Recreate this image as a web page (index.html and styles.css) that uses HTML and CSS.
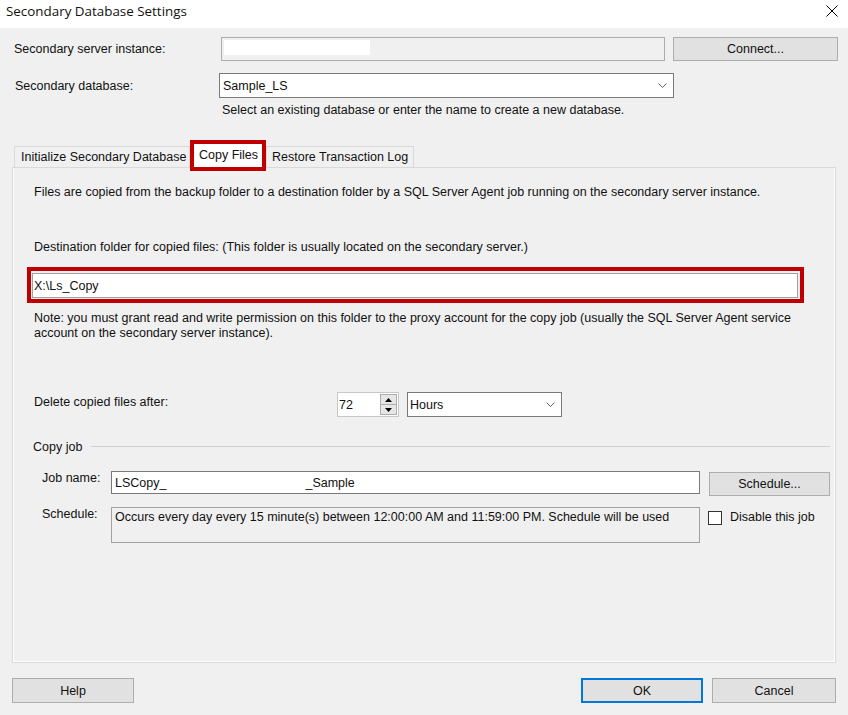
FILE: index.html
```html
<!DOCTYPE html>
<html>
<head>
<meta charset="utf-8">
<title>Secondary Database Settings</title>
<link rel="stylesheet" href="styles.css">
</head>
<body>
<div class="window">
  <div class="titlebar">
    <span class="title">Secondary Database Settings</span>
    <svg class="close" width="12" height="12" viewBox="0 0 12 12"><path d="M0.5 0.5 L11.5 11.5 M11.5 0.5 L0.5 11.5" stroke="#000" stroke-width="1" fill="none"/></svg>
  </div>
  <div class="client">
    <div class="row r1">
      <span class="lbl l-server">Secondary server instance:</span>
      <div class="textbox readonly server"><span class="redact"></span></div>
      <div class="btn connect">Connect...</div>
    </div>
    <div class="row r2">
      <span class="lbl l-db">Secondary database:</span>
      <div class="textbox combo db"><span class="val">Sample_LS</span><svg class="chev" width="9" height="5" viewBox="0 0 9 5"><path d="M0.5 0.5 L4.5 4.5 L8.5 0.5" stroke="#606060" stroke-width="1" fill="none"/></svg></div>
    </div>
    <div class="hint">Select an existing database or enter the name to create a new database.</div>

    <div class="tabs">
      <div class="tab t1">Initialize Secondary Database</div>
      <div class="tab t2 selected">Copy Files</div>
      <div class="tab t3">Restore Transaction Log</div>
    </div>

    <div class="panel">
      <div class="ptext intro">Files are copied from the backup folder to a destination folder by a SQL Server Agent job running on the secondary server instance.</div>
      <div class="ptext dest">Destination folder for copied files: (This folder is usually located on the secondary server.)</div>
      <div class="highlight">
        <div class="textbox destbox">X:\Ls_Copy</div>
      </div>
      <div class="ptext note">Note: you must grant read and write permission on this folder to the proxy account for the copy job (usually the SQL Server Agent service<br>account on the secondary server instance).</div>

      <div class="delrow">
        <span class="lbl l-del">Delete copied files after:</span>
        <div class="textbox spin">
          <span class="val">72</span>
          <div class="spinbtns">
            <div class="sb"><svg width="7" height="4" viewBox="0 0 7 4"><path d="M3.5 0 L7 4 L0 4 Z" fill="#000"/></svg></div>
            <div class="sb"><svg width="7" height="4" viewBox="0 0 7 4"><path d="M0 0 L7 0 L3.5 4 Z" fill="#000"/></svg></div>
          </div>
        </div>
        <div class="textbox combo hours"><span class="val">Hours</span><svg class="chev" width="9" height="5" viewBox="0 0 9 5"><path d="M0.5 0.5 L4.5 4.5 L8.5 0.5" stroke="#606060" stroke-width="1" fill="none"/></svg></div>
      </div>

      <div class="group">
        <span class="gtitle">Copy job</span>
        <span class="gline"></span>
      </div>

      <div class="jobrow">
        <span class="lbl l-job">Job name:</span>
        <div class="textbox jobname">LSCopy_<span class="gap"></span>_Sample</div>
        <div class="btn schedbtn">Schedule...</div>
      </div>

      <div class="schedrow">
        <span class="lbl l-sched">Schedule:</span>
        <div class="textbox readonly schedbox">Occurs every day every 15 minute(s) between 12:00:00 AM and 11:59:00 PM. Schedule will be used</div>
        <div class="check"><span class="box"></span><span class="clbl">Disable this job</span></div>
      </div>
    </div>

    <div class="footer">
      <div class="btn help">Help</div>
      <div class="spacer"></div>
      <div class="btn ok">OK</div>
      <div class="btn cancel">Cancel</div>
    </div>
  </div>
</div>
</body>
</html>
```

FILE: styles.css
```css
* { box-sizing: border-box; }

html, body {
  margin: 0;
  padding: 0;
}

body {
  width: 848px;
  height: 715px;
  overflow: hidden;
  background: #f0f0f0;
  font-family: "Liberation Sans", Arial, sans-serif;
  font-size: 12.5px;
  color: #111;
}

.window {
  width: 848px;
  height: 715px;
  display: flex;
  flex-direction: column;
}

.titlebar {
  height: 28px;
  background: #fff;
  display: flex;
  justify-content: space-between;
  align-items: flex-start;
  padding: 2px 10px 0 6px;
}

.title {
  font-family: "Open Sans", "Noto Sans", sans-serif;
  font-size: 13.4px;
  line-height: 18px;
}

.close {
  margin-top: 3px;
}

.client {
  flex: 1;
  padding-top: 9px;
}

.row {
  display: flex;
  align-items: center;
}

.lbl {
  line-height: 14px;
  white-space: nowrap;
}

.textbox {
  background: #fff;
  border: 1px solid #7a7a7a;
  line-height: 14px;
  white-space: nowrap;
}

.textbox.readonly {
  background: #f0f0f0;
}

.btn {
  background: #e1e1e1;
  border: 1px solid #adadad;
  display: flex;
  align-items: center;
  justify-content: center;
  line-height: 14px;
}

/* row 1 */
.r1 {
  height: 24px;
  padding-left: 14px;
}
.l-server { width: 207px; }
.server {
  width: 444px;
  height: 24px;
  border-color: #adadad;
  padding: 2px 0 0 2px;
}
.redact {
  display: block;
  width: 146px;
  height: 15px;
  background: #fff;
}
.connect {
  margin-left: 8px;
  width: 165px;
  height: 24px;
}

/* row 2 */
.r2 {
  margin-top: 12px;
  height: 25px;
  padding-left: 15px;
}
.l-db { width: 204px; }

.combo {
  display: flex;
  align-items: center;
  justify-content: space-between;
}
.db {
  width: 455px;
  height: 25px;
  padding: 0 6px 0 3px;
}

.hint {
  margin: 5px 0 0 222px;
  line-height: 14px;
}

/* tabs */
.tabs {
  display: flex;
  align-items: flex-end;
  margin: 23px 0 0 14px;
  height: 27px;
}
.tab {
  height: 21px;
  border: 1px solid #d9d9d9;
  border-bottom: none;
  background: #f0f0f0;
  line-height: 20px;
  white-space: nowrap;
}
.t1 {
  width: 176px;
  padding-left: 6px;
}
.t2 {
  width: 76px;
  height: 31px;
  margin-bottom: -4px;
  border: 4px solid #c00000;
  background: #fff;
  padding: 1px 0 0 5px;
  position: relative;
  z-index: 2;
}
.t3 {
  width: 148px;
  padding-left: 5px;
}

/* panel */
.panel {
  margin: 0 12px;
  height: 496px;
  border: 1px solid #d9d9d9;
  box-shadow: inset 1px 0 0 #fff, inset -1px 0 0 #fff, inset 0 -1px 0 #fff;
  display: flex;
  flex-direction: column;
}

.ptext {
  padding-left: 21px;
  line-height: 14px;
}
.intro { margin-top: 17px; }
.dest { margin-top: 41px; }

.highlight {
  margin: 13px 0 0 14px;
  width: 777px;
  height: 36px;
  border: 4px solid #c00000;
  padding: 2px 0 0 1px;
}
.destbox {
  width: 766px;
  height: 25px;
  border-color: #a0a0a0;
  padding: 5px 0 0 1px;
}

.note {
  margin-top: 8px;
  line-height: 15px;
}

.delrow {
  display: flex;
  align-items: flex-start;
  margin-top: 51px;
  padding-left: 21px;
  height: 25px;
}
.l-del {
  width: 303px;
  padding-top: 3px;
}
.spin {
  width: 62px;
  height: 25px;
  display: flex;
  align-items: center;
  justify-content: space-between;
  padding: 0 1px 0 1px;
  border-color: #c8c8c8;
}
.spinbtns {
  width: 17px;
  height: 21px;
  display: flex;
  flex-direction: column;
  border: 1px solid #adadad;
  background: #e6e6e6;
}
.sb {
  flex: 1;
  display: flex;
  align-items: center;
  justify-content: center;
}
.sb + .sb {
  border-top: 1px solid #adadad;
}
.hours {
  width: 155px;
  height: 25px;
  margin-left: 8px;
  padding: 0 6px 0 2px;
}

.group {
  display: flex;
  align-items: center;
  margin-top: 23px;
  padding-left: 20px;
  padding-right: 5px;
  height: 14px;
}
.gtitle {
  line-height: 14px;
  margin-right: 9px;
}
.gline {
  flex: 1;
  height: 1px;
  background: #d0d0d0;
  margin-top: -1px;
}

.jobrow {
  display: flex;
  align-items: flex-start;
  margin-top: 17px;
  padding-left: 29px;
  height: 25px;
}
.l-job {
  width: 69px;
  padding-top: 0;
}
.jobname {
  width: 589px;
  height: 23px;
  padding: 4px 0 0 3px;
}
.gap {
  display: inline-block;
  width: 139px;
}
.schedbtn {
  margin: 1px 0 0 9px;
  width: 121px;
  height: 24px;
}

.schedrow {
  display: flex;
  align-items: flex-start;
  margin-top: 11px;
  padding-left: 29px;
}
.l-sched {
  width: 69px;
  padding-top: 0;
}
.schedbox {
  width: 589px;
  height: 36px;
  border-color: #a0a0a0;
  padding: 2px 0 0 3px;
}
.check {
  display: flex;
  align-items: center;
  margin: 4px 0 0 8px;
}
.check .box {
  width: 14px;
  height: 14px;
  border: 1px solid #333;
  background: #fff;
}
.clbl {
  margin-left: 8px;
  line-height: 14px;
  margin-top: -3px;
}

/* footer */
.footer {
  display: flex;
  margin-top: 15px;
  padding: 0 12px;
  height: 25px;
}
.help {
  width: 122px;
  height: 25px;
}
.spacer { flex: 1; }
.ok {
  width: 122px;
  height: 25px;
  border: 2px solid #0078d7;
}
.cancel {
  width: 124px;
  height: 25px;
  margin-left: 9px;
}
```
